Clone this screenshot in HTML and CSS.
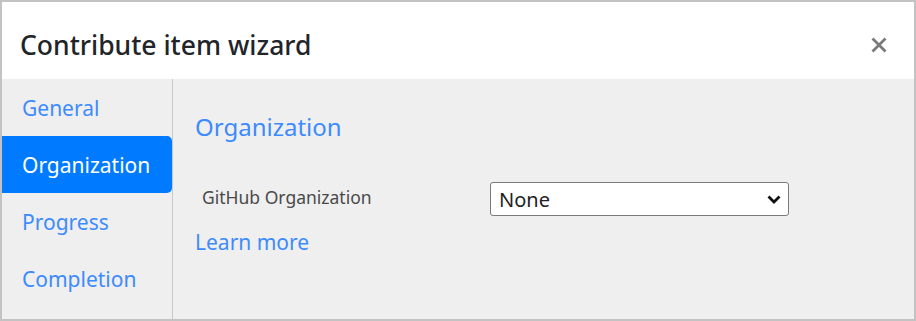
FILE: index.html
```html
<!DOCTYPE html>
<html lang="en">
<head>
    <meta charset="UTF-8">
    <meta name="viewport" content="width=device-width, initial-scale=1.0">
    <title>Contribute item wizard</title>
    <link rel="stylesheet" href="styles.css">
</head>
<body>
    <div class="modal">
        <div class="modal-header">
            <h2 class="modal-title">Contribute item wizard</h2>
            <button class="close" aria-label="Close">
                <svg width="18" height="18" viewBox="0 0 18 18">
                    <path d="M2.5 2.5 L15.5 15.5 M15.5 2.5 L2.5 15.5" stroke="#7a7a7a" stroke-width="2.8"/>
                </svg>
            </button>
        </div>
        <div class="modal-body">
            <nav class="steps">
                <a href="#" class="step">General</a>
                <a href="#" class="step active">Organization</a>
                <a href="#" class="step">Progress</a>
                <a href="#" class="step">Completion</a>
            </nav>
            <section class="pane">
                <h3 class="pane-title">Organization</h3>
                <div class="field">
                    <label for="org">GitHub Organization</label>
                    <div class="select-wrap">
                        <select id="org">
                            <option>None</option>
                        </select>
                        <svg class="chevron" width="14" height="9" viewBox="0 0 14 9">
                            <path d="M1.5 1.5 L7 7 L12.5 1.5" fill="none" stroke="#111" stroke-width="2.8"/>
                        </svg>
                    </div>
                </div>
                <a href="#" class="learn">Learn more</a>
            </section>
        </div>
    </div>
</body>
</html>
```

FILE: styles.css
```css
html, body {
    margin: 0;
    padding: 0;
}

body {
    font-family: 'Noto Sans', 'Open Sans', sans-serif;
    background: #fff;
}

.modal {
    width: 916px;
    height: 321px;
    box-sizing: border-box;
    border: 2px solid #c3c3c3;
    display: flex;
    flex-direction: column;
    overflow: hidden;
}

.modal-header {
    height: 77px;
    box-sizing: border-box;
    display: flex;
    align-items: center;
    justify-content: space-between;
    padding: 8px 26px 0 18px;
    background: #fff;
}

.modal-title {
    margin: 0;
    font-size: 26.5px;
    font-weight: 500;
    color: #212529;
}

.close {
    border: none;
    background: none;
    padding: 0;
    width: 18px;
    height: 18px;
    display: flex;
    align-items: center;
    justify-content: center;
    cursor: pointer;
}

.modal-body {
    flex: 1;
    display: flex;
    background: #efefef;
}

.steps {
    width: 170px;
    border-right: 1px solid #c8c8c8;
    display: flex;
    flex-direction: column;
}

.step {
    height: 57px;
    display: flex;
    align-items: center;
    padding: 0 20px;
    font-size: 21px;
    color: #3d8bfd;
    text-decoration: none;
    border-radius: 0 5px 5px 0;
}

.step.active {
    background: #007bff;
    color: #fff;
}

.pane {
    flex: 1;
    padding: 33px 22px 0 22px;
}

.pane-title {
    margin: 0 0 40px;
    font-size: 24px;
    font-weight: 400;
    color: #3d8bfd;
    line-height: 30px;
}

.field {
    display: flex;
    align-items: center;
}

.field label {
    width: 295px;
    padding-left: 7px;
    box-sizing: border-box;
    font-size: 17.5px;
    color: #4a4a4a;
    margin-top: -5px;
}

.select-wrap {
    position: relative;
    width: 299px;
}

.select-wrap select {
    display: block;
    width: 100%;
    height: 34px;
    appearance: none;
    border: 1px solid #7a7a7a;
    border-radius: 3px;
    background: #fff;
    font-family: inherit;
    font-size: 20px;
    color: #222;
    padding: 0 8px;
}

.chevron {
    position: absolute;
    right: 8px;
    top: 13px;
    pointer-events: none;
}

.learn {
    display: inline-block;
    margin-top: 12px;
    font-size: 21px;
    color: #3d8bfd;
    text-decoration: none;
}
```
